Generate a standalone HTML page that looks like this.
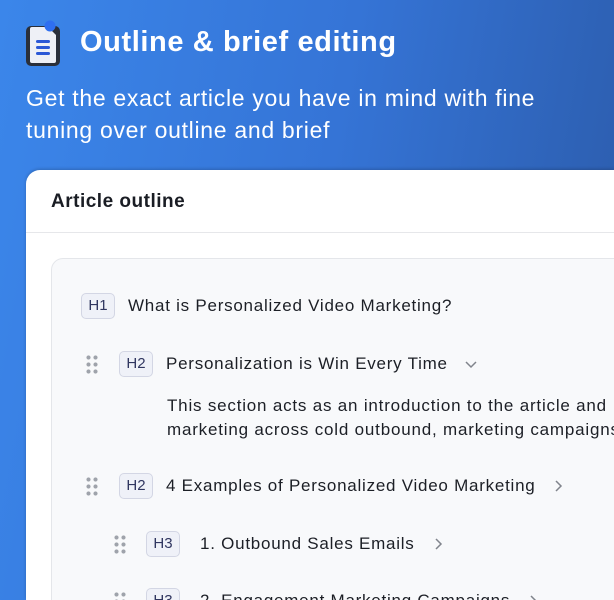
<!DOCTYPE html>
<html><head><style>
*{margin:0;padding:0;box-sizing:border-box}
html,body{width:614px;height:600px;overflow:hidden}
body{font-family:"Liberation Sans",sans-serif;background:linear-gradient(100deg,#3b86ea 0%,#3574d6 50%,#2b5aa8 100%);position:relative}
.t{position:absolute;left:80px;top:26px;color:#fff;font-weight:bold;font-size:29px;letter-spacing:0.6px}
.s{position:absolute;left:26px;top:82px;color:#fff;font-size:23px;line-height:32px;width:560px;letter-spacing:0.7px}
.card{position:absolute;left:26px;top:170px;width:588px;height:430px;overflow:hidden;background:#fff;border-radius:14px 0 0 0;box-shadow:0 -1px 3px rgba(0,0,0,.2)}
.ch{height:63px;border-bottom:1px solid #e6e7ea;padding:21px 0 0 25px;font-size:19px;font-weight:bold;color:#1a1d24;letter-spacing:0.5px}
.in{position:absolute;left:25px;top:88px;width:600px;height:400px;background:#f8f9fb;border:1px solid #e4e6ea;border-radius:12px}
.r{position:absolute;font-size:17px;color:#1c1f26;display:flex;align-items:center;height:26px;letter-spacing:0.75px;white-space:nowrap}
.b{display:inline-block;width:34px;height:26px;border:1px solid #d3d6e4;border-radius:5px;background:#eff1f8;color:#303660;font-size:15px;text-align:center;line-height:24px;margin-right:13px;letter-spacing:0}
.d{position:absolute;width:14px;height:20px;background:radial-gradient(circle,#9fa3ab 1.8px,transparent 2.3px) 0 0/7px 7px}
.p{position:absolute;left:141px;top:224px;font-size:17px;line-height:24px;color:#1c1f26;white-space:nowrap;letter-spacing:0.8px}
svg.c{margin-left:16px}
</style></head><body>
<svg style="position:absolute;left:25px;top:19px" width="38" height="48" viewBox="0 0 38 48">
<rect x="1" y="7" width="34" height="40" rx="5" fill="#2a2f3a"/>
<path d="M7 8h16l8 8v26a2 2 0 0 1-2 2H7a2 2 0 0 1-2-2V10a2 2 0 0 1 2-2z" fill="#eef0f6"/>
<rect x="11" y="21" width="14" height="3" rx="1.5" fill="#2b58d6"/>
<rect x="11" y="27" width="14" height="3" rx="1.5" fill="#2b58d6"/>
<rect x="11" y="33" width="14" height="3" rx="1.5" fill="#2b58d6"/>
<circle cx="25" cy="7" r="5.5" fill="#2f6ff0"/>
</svg>
<div class="t">Outline &amp; brief editing</div>
<div class="s">Get the exact article you have in mind with fine tuning over outline and brief</div>
<div class="card">
<div class="ch">Article outline</div>
<div class="in"></div>
<div class="r" style="left:55px;top:123px"><span class="b">H1</span>What is Personalized Video Marketing?</div>
<div class="d" style="left:59px;top:184px"></div>
<div class="r" style="left:93px;top:181px"><span class="b">H2</span>Personalization is Win Every Time<svg class="c" width="14" height="14" viewBox="0 0 14 14"><path d="M2 5l5 5 5-5" fill="none" stroke="#80848c" stroke-width="1.5"/></svg></div>
<div class="p">This section acts as an introduction to the article and<br>marketing across cold outbound, marketing campaigns</div>
<div class="d" style="left:59px;top:306px"></div>
<div class="r" style="left:93px;top:303px"><span class="b">H2</span>4 Examples of Personalized Video Marketing<svg class="c" width="14" height="14" viewBox="0 0 14 14"><path d="M5 2l5 5-5 5" fill="none" stroke="#80848c" stroke-width="1.5"/></svg></div>
<div class="d" style="left:87px;top:364px"></div>
<div class="r" style="left:120px;top:361px"><span class="b" style="margin-right:20px">H3</span>1. Outbound Sales Emails<svg class="c" width="14" height="14" viewBox="0 0 14 14"><path d="M5 2l5 5-5 5" fill="none" stroke="#80848c" stroke-width="1.5"/></svg></div>
<div class="d" style="left:87px;top:421px"></div>
<div class="r" style="left:120px;top:418px"><span class="b" style="margin-right:20px">H3</span>2. Engagement Marketing Campaigns<svg class="c" width="14" height="14" viewBox="0 0 14 14"><path d="M5 2l5 5-5 5" fill="none" stroke="#80848c" stroke-width="1.5"/></svg></div>
</div>
</body></html>
